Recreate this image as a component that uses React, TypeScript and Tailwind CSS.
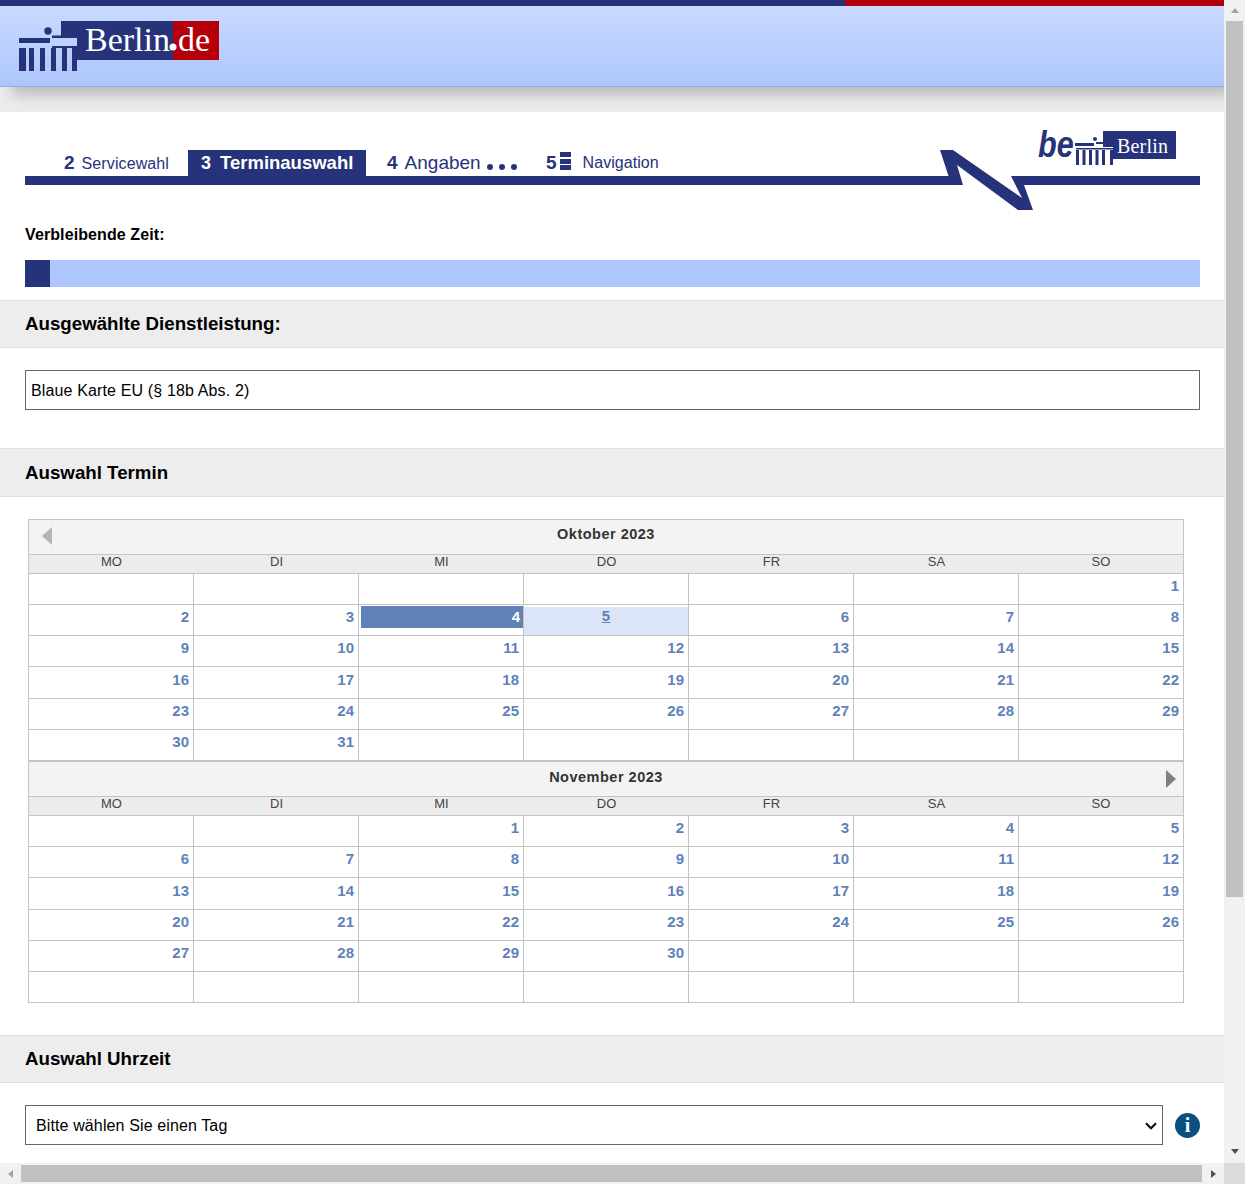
const navy = "#26337a";

const october = [
  [0, 0, 0, 0, 0, 0, 1],
  [2, 3, 4, 5, 6, 7, 8],
  [9, 10, 11, 12, 13, 14, 15],
  [16, 17, 18, 19, 20, 21, 22],
  [23, 24, 25, 26, 27, 28, 29],
  [30, 31, 0, 0, 0, 0, 0],
];

const november = [
  [0, 0, 1, 2, 3, 4, 5],
  [6, 7, 8, 9, 10, 11, 12],
  [13, 14, 15, 16, 17, 18, 19],
  [20, 21, 22, 23, 24, 25, 26],
  [27, 28, 29, 30, 0, 0, 0],
  [0, 0, 0, 0, 0, 0, 0],
];

const weekdays = ["MO", "DI", "MI", "DO", "FR", "SA", "SO"];

const GateLogo = () => (
  <div className="relative h-[50px] w-[200px]">
    <svg width="200" height="50" viewBox="0 0 200 50" className="absolute left-0 top-0">
      <path fill={navy} d="M42 0H154V39H58V17H42Z" />
      <rect x="154" y="0" width="46" height="39" fill="#b5000b" />
      <circle cx="29" cy="10" r="3.7" fill={navy} />
      <rect x="0" y="17" width="31" height="5" fill={navy} />
      <rect x="33" y="14.5" width="9" height="2.5" fill={navy} />
      <rect x="33" y="25" width="25" height="2" fill={navy} />
      <path
        fill={navy}
        d="M0 27H7V50H0ZM10 27H15V50H10ZM21 27H26V50H21ZM32 27H37V50H32ZM43 27H48V50H43ZM53 27H58V50H53Z"
      />
      <circle cx="154" cy="26" r="3.5" fill="#ffffff" />
    </svg>
    <span className="absolute left-[66px] top-0 font-['Liberation_Serif',serif] text-[34px] leading-[38px] text-white">
      Berlin
    </span>
    <span className="absolute left-[159px] top-0 font-['Liberation_Serif',serif] text-[34px] leading-[38px] text-white">
      de
    </span>
  </div>
);

const BeBerlinLogo = () => (
  <div className="relative h-[34px] w-[140px]">
    <svg width="140" height="34" viewBox="0 0 140 34" className="absolute left-0 top-0">
      <path fill={navy} d="M65 0H138V28H75V16H65Z" />
      <circle cx="57" cy="8" r="2" fill={navy} />
      <rect x="37" y="12" width="19" height="3" fill={navy} />
      <rect x="58" y="11" width="7" height="2" fill={navy} />
      <rect x="38" y="17" width="37" height="1.5" fill={navy} />
      <path
        fill={navy}
        d="M38 19H41V34H38ZM44.500 19H47.500V34H44.500ZM51 19H54V34H51ZM57.500 19H60.500V34H57.500ZM64 19H67V34H64ZM72 19H75V34H72Z"
      />
    </svg>
    <span className="absolute left-0 top-[-6px] origin-left scale-x-[0.85] font-['Liberation_Sans',sans-serif] text-[36px] leading-[40px] font-bold italic text-[#26337a]">
      be
    </span>
    <span className="absolute left-[79px] top-[3px] font-['Liberation_Serif',serif] text-[20px] leading-[24px] tracking-[0.2px] text-white">
      Berlin
    </span>
  </div>
);

const Bolt = () => (
  <svg width="96" height="61" viewBox="0 0 96 61">
    <rect x="0" y="26" width="96" height="9" fill="#ffffff" />
    <path
      fill={navy}
      d="M2 0H15L84 48L73 26H96V35H86L95 60H80L19 15L25 35H0V26H10.500Z"
    />
  </svg>
);

const SectionHeader = ({ children, tall }: { children: string; tall?: boolean }) => (
  <div
    className={`flex items-center border-y border-[#dedede] bg-[#ededed] px-[25px] text-[18.72px] font-bold text-black ${
      tall ? "h-[49px] pt-[1px]" : "h-[48px]"
    }`}
  >
    {children}
  </div>
);

const Month = ({
  title,
  rows,
  arrow,
  tallRow,
}: {
  title: string;
  rows: number[][];
  arrow?: "left" | "right";
  tallRow: number;
}) => (
  <div>
    <div
      className={`relative flex h-[35px] items-center justify-center border-t border-[#c4c4c4] bg-[#f3f3f3] text-[14.5px] font-bold tracking-[0.5px] text-[#333] ${
        arrow === "left" ? "pb-[4px]" : "pb-[2px]"
      }`}
    >
      {arrow === "left" && (
        <div className="absolute left-[13px] top-[7px] h-0 w-0 border-y-[9px] border-r-[10px] border-y-transparent border-r-[#b5b5b5]" />
      )}
      {title}
      {arrow === "right" && (
        <div className="absolute right-[7px] top-[8px] h-0 w-0 border-y-[9px] border-l-[10px] border-y-transparent border-l-[#808080]" />
      )}
    </div>
    <div className="grid h-[20px] grid-cols-[repeat(6,165px)_164px] border-y border-[#c4c4c4] bg-[#ececec] text-center text-[13px] leading-[13px] text-[#444]">
      {weekdays.map((d) => (
        <div key={d}>{d}</div>
      ))}
    </div>
    {rows.map((row, i) => (
      <div
        key={i}
        className={`grid grid-cols-[repeat(6,165px)_164px] border-b border-[#c4c4c4] ${
          i === tallRow ? "h-[32px]" : "h-[31px]"
        }`}
      >
        {row.map((n, j) => {
          const selected = title.startsWith("Okt") && n === 4;
          const today = title.startsWith("Okt") && n === 5;
          return (
            <div
              key={j}
              className={`text-right text-[15px] font-bold text-[#5f82b9] ${j < 6 ? "border-r border-[#c4c4c4]" : ""}`}
            >
              {selected ? (
                <div className="ml-[2px] mt-[1px] h-[22px] bg-[#5f81b8] pr-[3px] leading-[22px] text-white">4</div>
              ) : today ? (
                <div className="mt-[2px] h-[28px] bg-[#dce4f8] text-center leading-[18px] underline">5</div>
              ) : n > 0 ? (
                <div className={`pr-[4px] ${i === tallRow ? "leading-[25px]" : "leading-[23px]"}`}>{n}</div>
              ) : null}
            </div>
          );
        })}
      </div>
    ))}
  </div>
);

export default function App() {
  return (
    <div className="grid h-[1184px] w-[1245px] grid-cols-[1224px_21px] grid-rows-[1163px_21px] overflow-hidden bg-white font-['Liberation_Sans',Arial,sans-serif]">
      <div className="overflow-hidden">
        <div className="flex h-[6px]">
          <div className="w-[845px] bg-[#26337a]" />
          <div className="flex-1 bg-[#b5000b]" />
        </div>
        <div className="relative z-10 h-[81px] border-b border-[#92acdc] bg-gradient-to-b from-[#c9daff] to-[#adc6fb] pl-[19px] pt-[15px] shadow-[12px_8px_12px_rgba(0,0,0,0.2)]">
          <GateLogo />
        </div>
        <div className="h-[25px] bg-[#ebebeb]" />

        <div className="relative pl-[25px] pr-[24px] pt-[38px]">
          <div className="absolute left-[1038px] top-[19px]">
            <BeBerlinLogo />
          </div>
          <div className="absolute left-[938px] top-[38px]">
            <Bolt />
          </div>
          <div className="flex h-[26px] items-center text-[#26337a]">
            <div className="ml-[39px] flex w-[124px] items-baseline">
              <span className="text-[19px] font-bold">2</span>
              <span className="ml-[7px] text-[16px] tracking-[0.1px]">Servicewahl</span>
            </div>
            <div className="flex h-[26px] w-[178px] items-center bg-[#26337a] pl-[13px] text-white">
              <span className="text-[18px] font-bold">3</span>
              <span className="ml-[9px] text-[18.5px] font-bold">Terminauswahl</span>
            </div>
            <div className="ml-[21px] flex w-[159px] items-baseline">
              <span className="text-[19px] font-bold">4</span>
              <span className="ml-[7px] text-[19px]">Angaben</span>
              <span className="ml-[6px] flex gap-[6px] self-center pt-[8px]">
                <span className="h-[6px] w-[6px] rounded-full bg-[#26337a]" />
                <span className="h-[6px] w-[6px] rounded-full bg-[#26337a]" />
                <span className="h-[6px] w-[6px] rounded-full bg-[#26337a]" />
              </span>
            </div>
            <div className="flex items-center">
              <span className="text-[19px] font-bold">5</span>
              <span className="mb-[4px] ml-[3px] flex w-[11px] flex-col gap-[1.5px]">
                <span className="h-[5px] bg-[#26337a]" />
                <span className="h-[5px] bg-[#26337a]" />
                <span className="h-[5px] bg-[#26337a]" />
              </span>
              <span className="ml-[12px] text-[16px] tracking-[0.05px]">Navigation</span>
            </div>
          </div>
          <div className="h-[9px] bg-[#26337a]" />
          <div className="pt-[41px] text-[16px] font-bold leading-[18px] tracking-[0.1px] text-black">
            Verbleibende Zeit:
          </div>
          <div className="mt-[16px] h-[27px] bg-[#adc6fb]">
            <div className="h-full w-[25px] bg-[#26337a]" />
          </div>
        </div>

        <div className="mt-[13px]">
          <SectionHeader>Ausgewählte Dienstleistung:</SectionHeader>
        </div>
        <div className="ml-[25px] mr-[24px] mt-[22px] flex h-[40px] items-center border border-[#666] px-[5px] pt-[1px] text-[16px] tracking-[0.14px] text-black">
          Blaue Karte EU (§ 18b Abs. 2)
        </div>

        <div className="mt-[38px]">
          <SectionHeader tall>Auswahl Termin</SectionHeader>
        </div>
        <div className="ml-[28px] mt-[22px] w-[1156px] border-x border-[#c4c4c4]">
          <Month title="Oktober 2023" rows={october} arrow="left" tallRow={3} />
          <Month title="November 2023" rows={november} arrow="right" tallRow={2} />
        </div>

        <div className="mt-[32px]">
          <SectionHeader>Auswahl Uhrzeit</SectionHeader>
        </div>
        <div className="ml-[25px] mt-[22px] flex items-center gap-[12px]">
          <div className="relative">
            <select className="block h-[40px] w-[1138px] appearance-none border border-[#666] bg-white pl-[10px] pt-[1px] text-[16px] tracking-[0.12px] text-black">
              <option>Bitte wählen Sie einen Tag</option>
            </select>
            <svg
              width="12"
              height="8"
              viewBox="0 0 12 8"
              className="pointer-events-none absolute right-[6px] top-[17px]"
            >
              <path d="M1 1.200L6 6.200L11 1.200" fill="none" stroke="#111" strokeWidth="2.200" />
            </svg>
          </div>
          <div className="flex h-[25px] w-[25px] items-center justify-center rounded-full bg-[#0a4f7f] font-['Liberation_Serif',serif] text-[20px] font-bold text-white">
            i
          </div>
        </div>
      </div>

      <div className="flex flex-col items-center bg-[#f1f1f1]">
        <div className="flex h-[21px] items-center justify-center">
          <div className="h-0 w-0 border-x-[4.5px] border-b-[5px] border-x-transparent border-b-[#a3a3a3]" />
        </div>
        <div className="h-[876px] w-[17px] bg-[#c1c1c1]" />
        <div className="flex-1" />
        <div className="flex h-[24px] items-center justify-center">
          <div className="h-0 w-0 border-x-[4.5px] border-t-[5px] border-x-transparent border-t-[#505050]" />
        </div>
      </div>
      <div className="flex items-center bg-[#f1f1f1]">
        <div className="flex w-[21px] justify-center">
          <div className="h-0 w-0 border-y-[4.5px] border-r-[5px] border-y-transparent border-r-[#a3a3a3]" />
        </div>
        <div className="h-[17px] w-[1181px] bg-[#c1c1c1]" />
        <div className="flex flex-1 justify-center">
          <div className="h-0 w-0 border-y-[4.5px] border-l-[5px] border-y-transparent border-l-[#505050]" />
        </div>
      </div>
      <div className="bg-[#dcdcdc]" />
    </div>
  );
}
